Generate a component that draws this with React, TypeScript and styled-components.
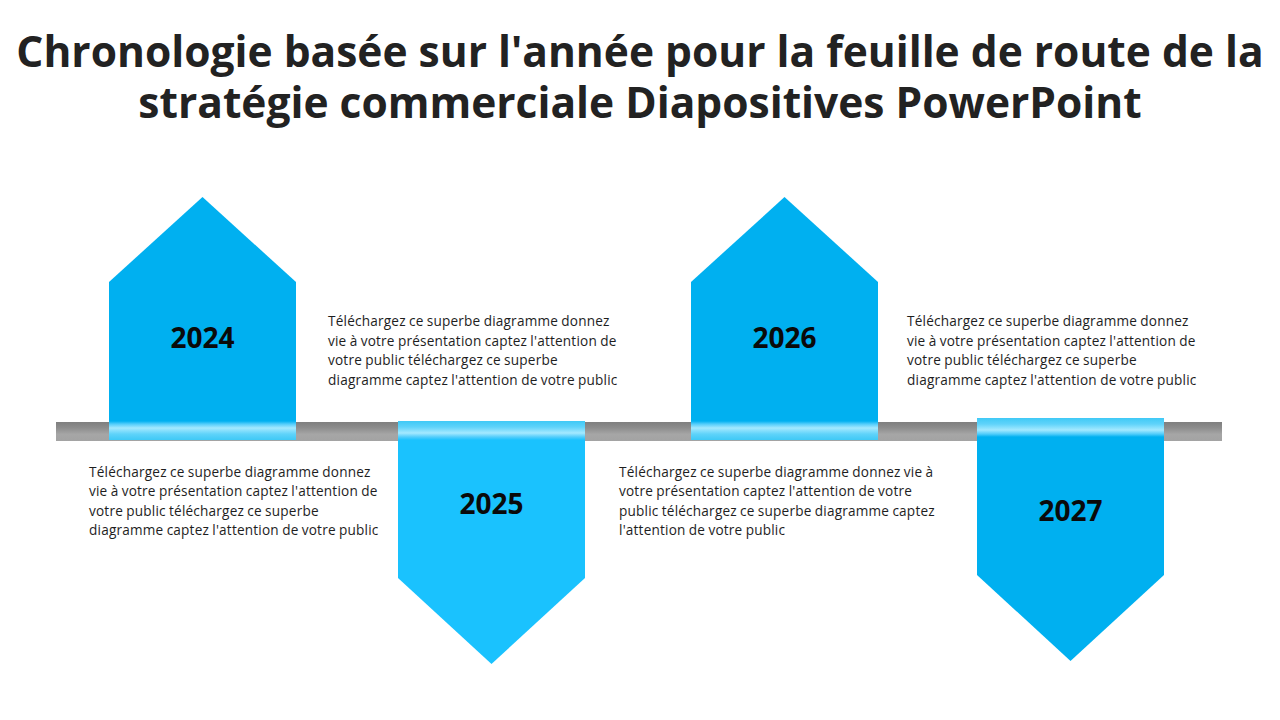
import React from 'react';
import styled, { createGlobalStyle } from 'styled-components';

type Direction = 'up' | 'down';

interface Milestone {
  year: string;
  dir: Direction;
  color: string;
  shift: number;
  labelTop: number;
}

const TEXT_TOP =
  "Téléchargez ce superbe diagramme donnez\nvie à votre présentation captez l'attention de\nvotre public téléchargez ce superbe\ndiagramme captez l'attention de votre public";
const TEXT_BOTTOM_WIDE =
  "Téléchargez ce superbe diagramme donnez vie à\nvotre présentation captez l'attention de votre\npublic téléchargez ce superbe diagramme captez\nl'attention de votre public";

const GlobalStyle = createGlobalStyle`
  html, body {
    margin: 0;
    padding: 0;
    background: #fff;
  }
  body {
    font-family: "Open Sans", "Liberation Sans", sans-serif;
  }
`;

const Slide = styled.div`
  width: 1280px;
  height: 720px;
  overflow: hidden;
  background: #fff;
  display: flex;
  flex-direction: column;
`;

const Title = styled.h1`
  margin: 25px 0 0;
  text-align: center;
  font-family: "Open Sans", sans-serif;
  font-weight: 700;
  font-size: 42.5px;
  line-height: 51px;
  color: #222;
  white-space: nowrap;
`;

// Timeline: bar drawn as a background strip, the rows overlap it
const Timeline = styled.div`
  margin: 70px 0 0 56px;
  width: 1166px;
  background: linear-gradient(180deg, #7f7f7f 0%, #8c8c8c 30%, #a6a6a6 65%, #a3a3a3 100%) no-repeat;
  background-position: 0 225px;
  background-size: 100% 19px;
`;

const Row = styled.div<{ $overlap?: number }>`
  display: flex;
  margin-top: ${({ $overlap }) => ($overlap ? `-${$overlap}px` : '0')};
`;

const Spacer = styled.div<{ $w: number }>`
  flex: 0 0 ${({ $w }) => $w}px;
`;

const band = (color: string) =>
  `linear-gradient(180deg, #3fc9f6 0px, #5fd3fa 6px, #a4e9ff 12px, #52cdfb 16px, ${color} 19px)`;

const Arrow = styled.div<{ $dir: Direction; $color: string; $shift: number }>`
  flex: 0 0 187px;
  height: 243px;
  margin-top: ${({ $shift }) => $shift}px;
  display: flex;
  justify-content: center;
  clip-path: ${({ $dir }) =>
    $dir === 'up'
      ? 'polygon(50% 0, 100% 85px, 100% 100%, 0 100%, 0 85px)'
      : 'polygon(0 0, 100% 0, 100% 157px, 50% 100%, 0 157px)'};
  background: ${({ $dir, $color }) =>
    $dir === 'up'
      ? `${band($color).replace('180deg', '0deg')} no-repeat 0 100% / 100% 19px, ${$color}`
      : `${band($color)} no-repeat 0 0 / 100% 19px, ${$color}`};
`;

const Year = styled.span<{ $top: number }>`
  margin-top: ${({ $top }) => $top}px;
  font-family: "Open Sans", sans-serif;
  font-weight: 700;
  font-size: 28px;
  line-height: 30px;
  height: 30px;
  color: #0a0a0a;
`;

const Blurb = styled.p<{ $w: number; $top?: number; $bottom?: number }>`
  flex: 0 0 ${({ $w }) => $w}px;
  margin: ${({ $top }) => $top ?? 0}px 0 ${({ $bottom }) => $bottom ?? 0}px;
  align-self: ${({ $bottom }) => ($bottom !== undefined ? 'flex-end' : 'flex-start')};
  white-space: pre;
  font-family: "Open Sans", sans-serif;
  font-size: 13.6px;
  letter-spacing: 0.2px;
  word-spacing: -0.5px;
  line-height: 19.4px;
  color: #1e1e1e;
`;

const ArrowShape: React.FC<{ m: Milestone }> = ({ m }) => (
  <Arrow $dir={m.dir} $color={m.color} $shift={m.shift}>
    <Year $top={m.labelTop}>{m.year}</Year>
  </Arrow>
);

const up: Milestone[] = [
  { year: '2024', dir: 'up', color: '#00b0f0', shift: 0, labelTop: 125 },
  { year: '2026', dir: 'up', color: '#00b0f0', shift: 0, labelTop: 125 },
];

const down: Milestone[] = [
  { year: '2025', dir: 'down', color: '#1ac2fe', shift: 0, labelTop: 67 },
  { year: '2027', dir: 'down', color: '#00b0f0', shift: -3, labelTop: 77 },
];

export default function App() {
  return (
    <Slide>
      <GlobalStyle />
      <Title>
        Chronologie basée sur l'année pour la feuille de route de la
        <br />
        stratégie commerciale Diapositives PowerPoint
      </Title>
      <Timeline>
        <Row>
          <Spacer $w={53} />
          <ArrowShape m={up[0]} />
          <Spacer $w={32} />
          <Blurb $w={363} $bottom={51}>{TEXT_TOP}</Blurb>
          <ArrowShape m={up[1]} />
          <Spacer $w={29} />
          <Blurb $w={300} $bottom={51}>{TEXT_TOP}</Blurb>
        </Row>
        <Row $overlap={19}>
          <Spacer $w={33} />
          <Blurb $w={309} $top={41}>{TEXT_TOP}</Blurb>
          <ArrowShape m={down[0]} />
          <Spacer $w={34} />
          <Blurb $w={358} $top={41}>{TEXT_BOTTOM_WIDE}</Blurb>
          <ArrowShape m={down[1]} />
        </Row>
      </Timeline>
    </Slide>
  );
}
